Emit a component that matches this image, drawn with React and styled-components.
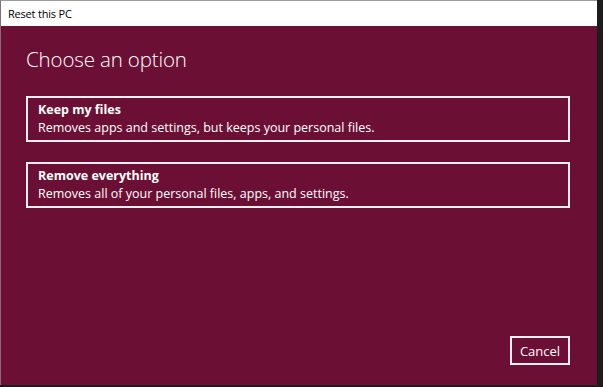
import React from "react";
import styled, { createGlobalStyle } from "styled-components";

const Global = createGlobalStyle`
  html, body { margin: 0; padding: 0; background: #1c1c1c; }
  body { width: 603px; height: 387px; overflow: hidden; font-family: "Segoe UI", "Open Sans", "Noto Sans", sans-serif; }
`;

const Window = styled.div`
  width: 597px;
  height: 385px;
  display: flex;
  flex-direction: column;
  background: #6b1034;
  border-left: 1px solid #8a6a76;
  border-top: 1px solid #9a9a9a;
  box-sizing: border-box;
`;

const TitleBar = styled.div`
  height: 25px;
  background: #ffffff;
  display: flex;
  align-items: center;
  padding-left: 7px;
  font-size: 11px;
  color: #000;
  font-family: "Open Sans", "Noto Sans", sans-serif;
  letter-spacing: -0.2px;
`;

const Body = styled.div`
  flex: 1;
  display: flex;
  flex-direction: column;
  padding: 19px 27px 20px 25px;
  color: #fff;
`;

const Heading = styled.h1`
  margin: 0 0 23px 0;
  font-family: "Open Sans", sans-serif;
  font-weight: 300;
  font-size: 20.5px;
  line-height: 28px;
  letter-spacing: -0.15px;
`;

const Options = styled.div`
  display: flex;
  flex-direction: column;
  gap: 20px;
`;

const Option = styled.button`
  all: unset;
  box-sizing: border-box;
  width: 544px;
  height: 46px;
  border: 2px solid #f4eef0;
  padding: 3px 10px 0;
  display: flex;
  flex-direction: column;
  font-family: "Open Sans", sans-serif;
  color: #fff;
`;

const OptionTitle = styled.span`
  font-weight: 700;
  font-size: 12.5px;
  line-height: 18px;
  letter-spacing: 0;
`;

const OptionDesc = styled.span`
  font-size: 12.5px;
  line-height: 18px;
  letter-spacing: 0;
`;

const Footer = styled.div`
  margin-top: auto;
  display: flex;
  justify-content: flex-end;
`;

const Cancel = styled.button`
  all: unset;
  box-sizing: border-box;
  width: 60px;
  height: 29px;
  border: 2px solid #f4eef0;
  display: flex;
  align-items: center;
  justify-content: center;
  font-family: "Open Sans", sans-serif;
  font-size: 13px;
  color: #fff;
`;

export default function App() {
  return (
    <>
      <Global />
      <Window>
        <TitleBar>Reset this PC</TitleBar>
        <Body>
          <Heading>Choose an option</Heading>
          <Options>
            <Option>
              <OptionTitle>Keep my files</OptionTitle>
              <OptionDesc>Removes apps and settings, but keeps your personal files.</OptionDesc>
            </Option>
            <Option>
              <OptionTitle>Remove everything</OptionTitle>
              <OptionDesc>Removes all of your personal files, apps, and settings.</OptionDesc>
            </Option>
          </Options>
          <Footer>
            <Cancel>Cancel</Cancel>
          </Footer>
        </Body>
      </Window>
    </>
  );
}
